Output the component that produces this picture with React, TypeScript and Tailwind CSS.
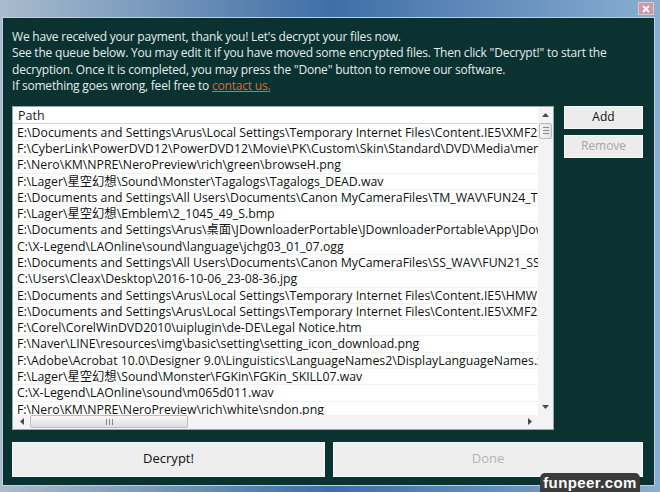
import React from "react";

const PATHS = [
  "E:\\Documents and Settings\\Arus\\Local Settings\\Temporary Internet Files\\Content.IE5\\XMF2SQ7K",
  "F:\\CyberLink\\PowerDVD12\\PowerDVD12\\Movie\\PK\\Custom\\Skin\\Standard\\DVD\\Media\\menu",
  "F:\\Nero\\KM\\NPRE\\NeroPreview\\rich\\green\\browseH.png",
  "F:\\Lager\\星空幻想\\Sound\\Monster\\Tagalogs\\Tagalogs_DEAD.wav",
  "E:\\Documents and Settings\\All Users\\Documents\\Canon MyCameraFiles\\TM_WAV\\FUN24_T1",
  "F:\\Lager\\星空幻想\\Emblem\\2_1045_49_S.bmp",
  "E:\\Documents and Settings\\Arus\\桌面\\JDownloaderPortable\\JDownloaderPortable\\App\\JDownl",
  "C:\\X-Legend\\LAOnline\\sound\\language\\jchg03_01_07.ogg",
  "E:\\Documents and Settings\\All Users\\Documents\\Canon MyCameraFiles\\SS_WAV\\FUN21_SS",
  "C:\\Users\\Cleax\\Desktop\\2016-10-06_23-08-36.jpg",
  "E:\\Documents and Settings\\Arus\\Local Settings\\Temporary Internet Files\\Content.IE5\\HMWL2",
  "E:\\Documents and Settings\\Arus\\Local Settings\\Temporary Internet Files\\Content.IE5\\XMF2SQ7K",
  "F:\\Corel\\CorelWinDVD2010\\uiplugin\\de-DE\\Legal Notice.htm",
  "F:\\Naver\\LINE\\resources\\img\\basic\\setting\\setting_icon_download.png",
  "F:\\Adobe\\Acrobat 10.0\\Designer 9.0\\Linguistics\\LanguageNames2\\DisplayLanguageNames.xml",
  "F:\\Lager\\星空幻想\\Sound\\Monster\\FGKin\\FGKin_SKILL07.wav",
  "C:\\X-Legend\\LAOnline\\sound\\m065d011.wav",
  "F:\\Nero\\KM\\NPRE\\NeroPreview\\rich\\white\\sndon.png",
];

const font = "font-['Open_Sans','Noto_Sans_CJK_TC',sans-serif]";

function Arrow({ dir }: { dir: "up" | "down" | "left" | "right" }) {
  const pts = {
    up: "0,4 3.5,0 7,4",
    down: "0,0 3.5,4 7,0",
    left: "4,0 0,3.5 4,7",
    right: "0,0 4,3.5 0,7",
  }[dir];
  const vertical = dir === "up" || dir === "down";
  return (
    <svg width={vertical ? 7 : 4} height={vertical ? 4 : 7} viewBox={vertical ? "0 0 7 4" : "0 0 4 7"}>
      <polygon points={pts} fill="#4a4a4a" />
    </svg>
  );
}

export default function App() {
  return (
    <div className={`relative w-[660px] h-[492px] overflow-hidden bg-gradient-to-r from-[#a9bccd] via-[#3f6ea6] to-[#8aaed2] ${font}`}>
      {/* title strip */}
      <div className="h-[17px] flex justify-end pr-[6px] pt-[2px]">
        <div className="w-[16px] h-[13px] bg-[#c79aa4] border border-[#e2c6cc] flex items-center justify-center">
          <svg width="8" height="8" viewBox="0 0 8 8">
            <path d="M1 1 L7 7 M7 1 L1 7" stroke="#fff" strokeWidth="1.8" />
          </svg>
        </div>
      </div>

      {/* window frame */}
      <div className="ml-[2px] w-[653px] h-[469px] border border-[#c3d0db] bg-[#0a3231] flex flex-col pl-[9px] pr-[8px] pt-[11px] pb-[7px]">
        <div className="text-[12px] leading-[16.4px] tracking-[-0.2px] text-[#e6eceb]">
          <p>We have received your payment, thank you! Let's decrypt your files now.</p>
          <p>
            See the queue below. You may edit it if you have moved some encrypted files. Then click "Decrypt!" to start the
            decryption. Once it is completed, you may press the "Done" button to remove our software.
          </p>
          <p>
            If something goes wrong, feel free to{" "}
            <span className="text-[#e0682c] underline">contact us.</span>
          </p>
        </div>

        <div className="mt-[11px] flex gap-[10px]">
          {/* list */}
          <div className="w-[542px] h-[324px] bg-white border border-[#9aa6ad] grid grid-cols-[1fr_15px] grid-rows-[1fr_14px]">
            <div className="overflow-hidden flex flex-col min-w-0">
              <div className="h-[17px] shrink-0 border-b border-[#d8d8d8] pl-[5px] text-[12.5px] leading-[17px] text-[#1a1a1a]">
                Path
              </div>
              <div className="overflow-hidden pt-[1px]">
                {PATHS.map((p, i) => (
                  <div
                    key={i}
                    className="h-[16.3px] border-b border-[#f2f2f2] pl-[4px] text-[12.3px] leading-[16px] text-[#111] whitespace-nowrap"
                  >
                    {p}
                  </div>
                ))}
              </div>
            </div>

            {/* vertical scrollbar */}
            <div className="bg-[#f3f3f3] flex flex-col items-center">
              <div className="h-[16px] flex items-center justify-center">
                <Arrow dir="up" />
              </div>
              <div className="w-[13px] h-[16px] bg-gradient-to-r from-[#f6f6f6] to-[#e2e2e2] border border-[#b9b9b9] rounded-[2px] flex flex-col items-center justify-center gap-[2px]">
                <div className="w-[6px] h-px bg-[#888]" />
                <div className="w-[6px] h-px bg-[#888]" />
                <div className="w-[6px] h-px bg-[#888]" />
              </div>
              <div className="flex-1" />
              <div className="h-[16px] flex items-center justify-center">
                <Arrow dir="down" />
              </div>
            </div>

            {/* horizontal scrollbar */}
            <div className="bg-[#f3f3f3] flex items-center">
              <div className="w-[17px] flex justify-center">
                <Arrow dir="left" />
              </div>
              <div className="w-[158px] h-[13px] bg-gradient-to-b from-[#f8f8f8] to-[#dedede] border border-[#bdbdbd] rounded-[2px] flex items-center justify-center gap-[2px]">
                <div className="w-px h-[6px] bg-[#888]" />
                <div className="w-px h-[6px] bg-[#888]" />
                <div className="w-px h-[6px] bg-[#888]" />
              </div>
              <div className="flex-1" />
              <div className="w-[17px] flex justify-center">
                <Arrow dir="right" />
              </div>
            </div>
            <div className="bg-[#f3f3f3]" />
          </div>

          {/* side buttons */}
          <div className="w-[79px] flex flex-col gap-[6px]">
            <div className="h-[23px] bg-[#ececec] border border-[#f7f7f7] flex items-center justify-center text-[12px] text-[#111]">
              Add
            </div>
            <div className="h-[23px] bg-[#ececec] border border-[#f7f7f7] flex items-center justify-center text-[12px] text-[#a6a6a6]">
              Remove
            </div>
          </div>
        </div>

        <div className="mt-[12px] flex gap-[8px]">
          <div className="w-[313px] h-[35px] bg-[#eeeeee] border border-[#f8f8f8] flex items-center justify-center text-[13px] text-[#111]">
            Decrypt!
          </div>
          <div className="w-[310px] h-[35px] bg-[#eeeeee] border border-[#f8f8f8] flex items-center justify-center text-[13px] text-[#b4b4b4]">
            Done
          </div>
        </div>
      </div>

      {/* watermark */}
      <div className="absolute left-[540px] top-[473px] w-[100px] h-[22px] rounded-t-[5px] bg-[#3b3b3b] flex items-start justify-center text-white font-['Liberation_Sans',sans-serif] font-bold text-[15px] leading-[19px] tracking-[0.4px]">
        funpeer.com
      </div>
    </div>
  );
}
